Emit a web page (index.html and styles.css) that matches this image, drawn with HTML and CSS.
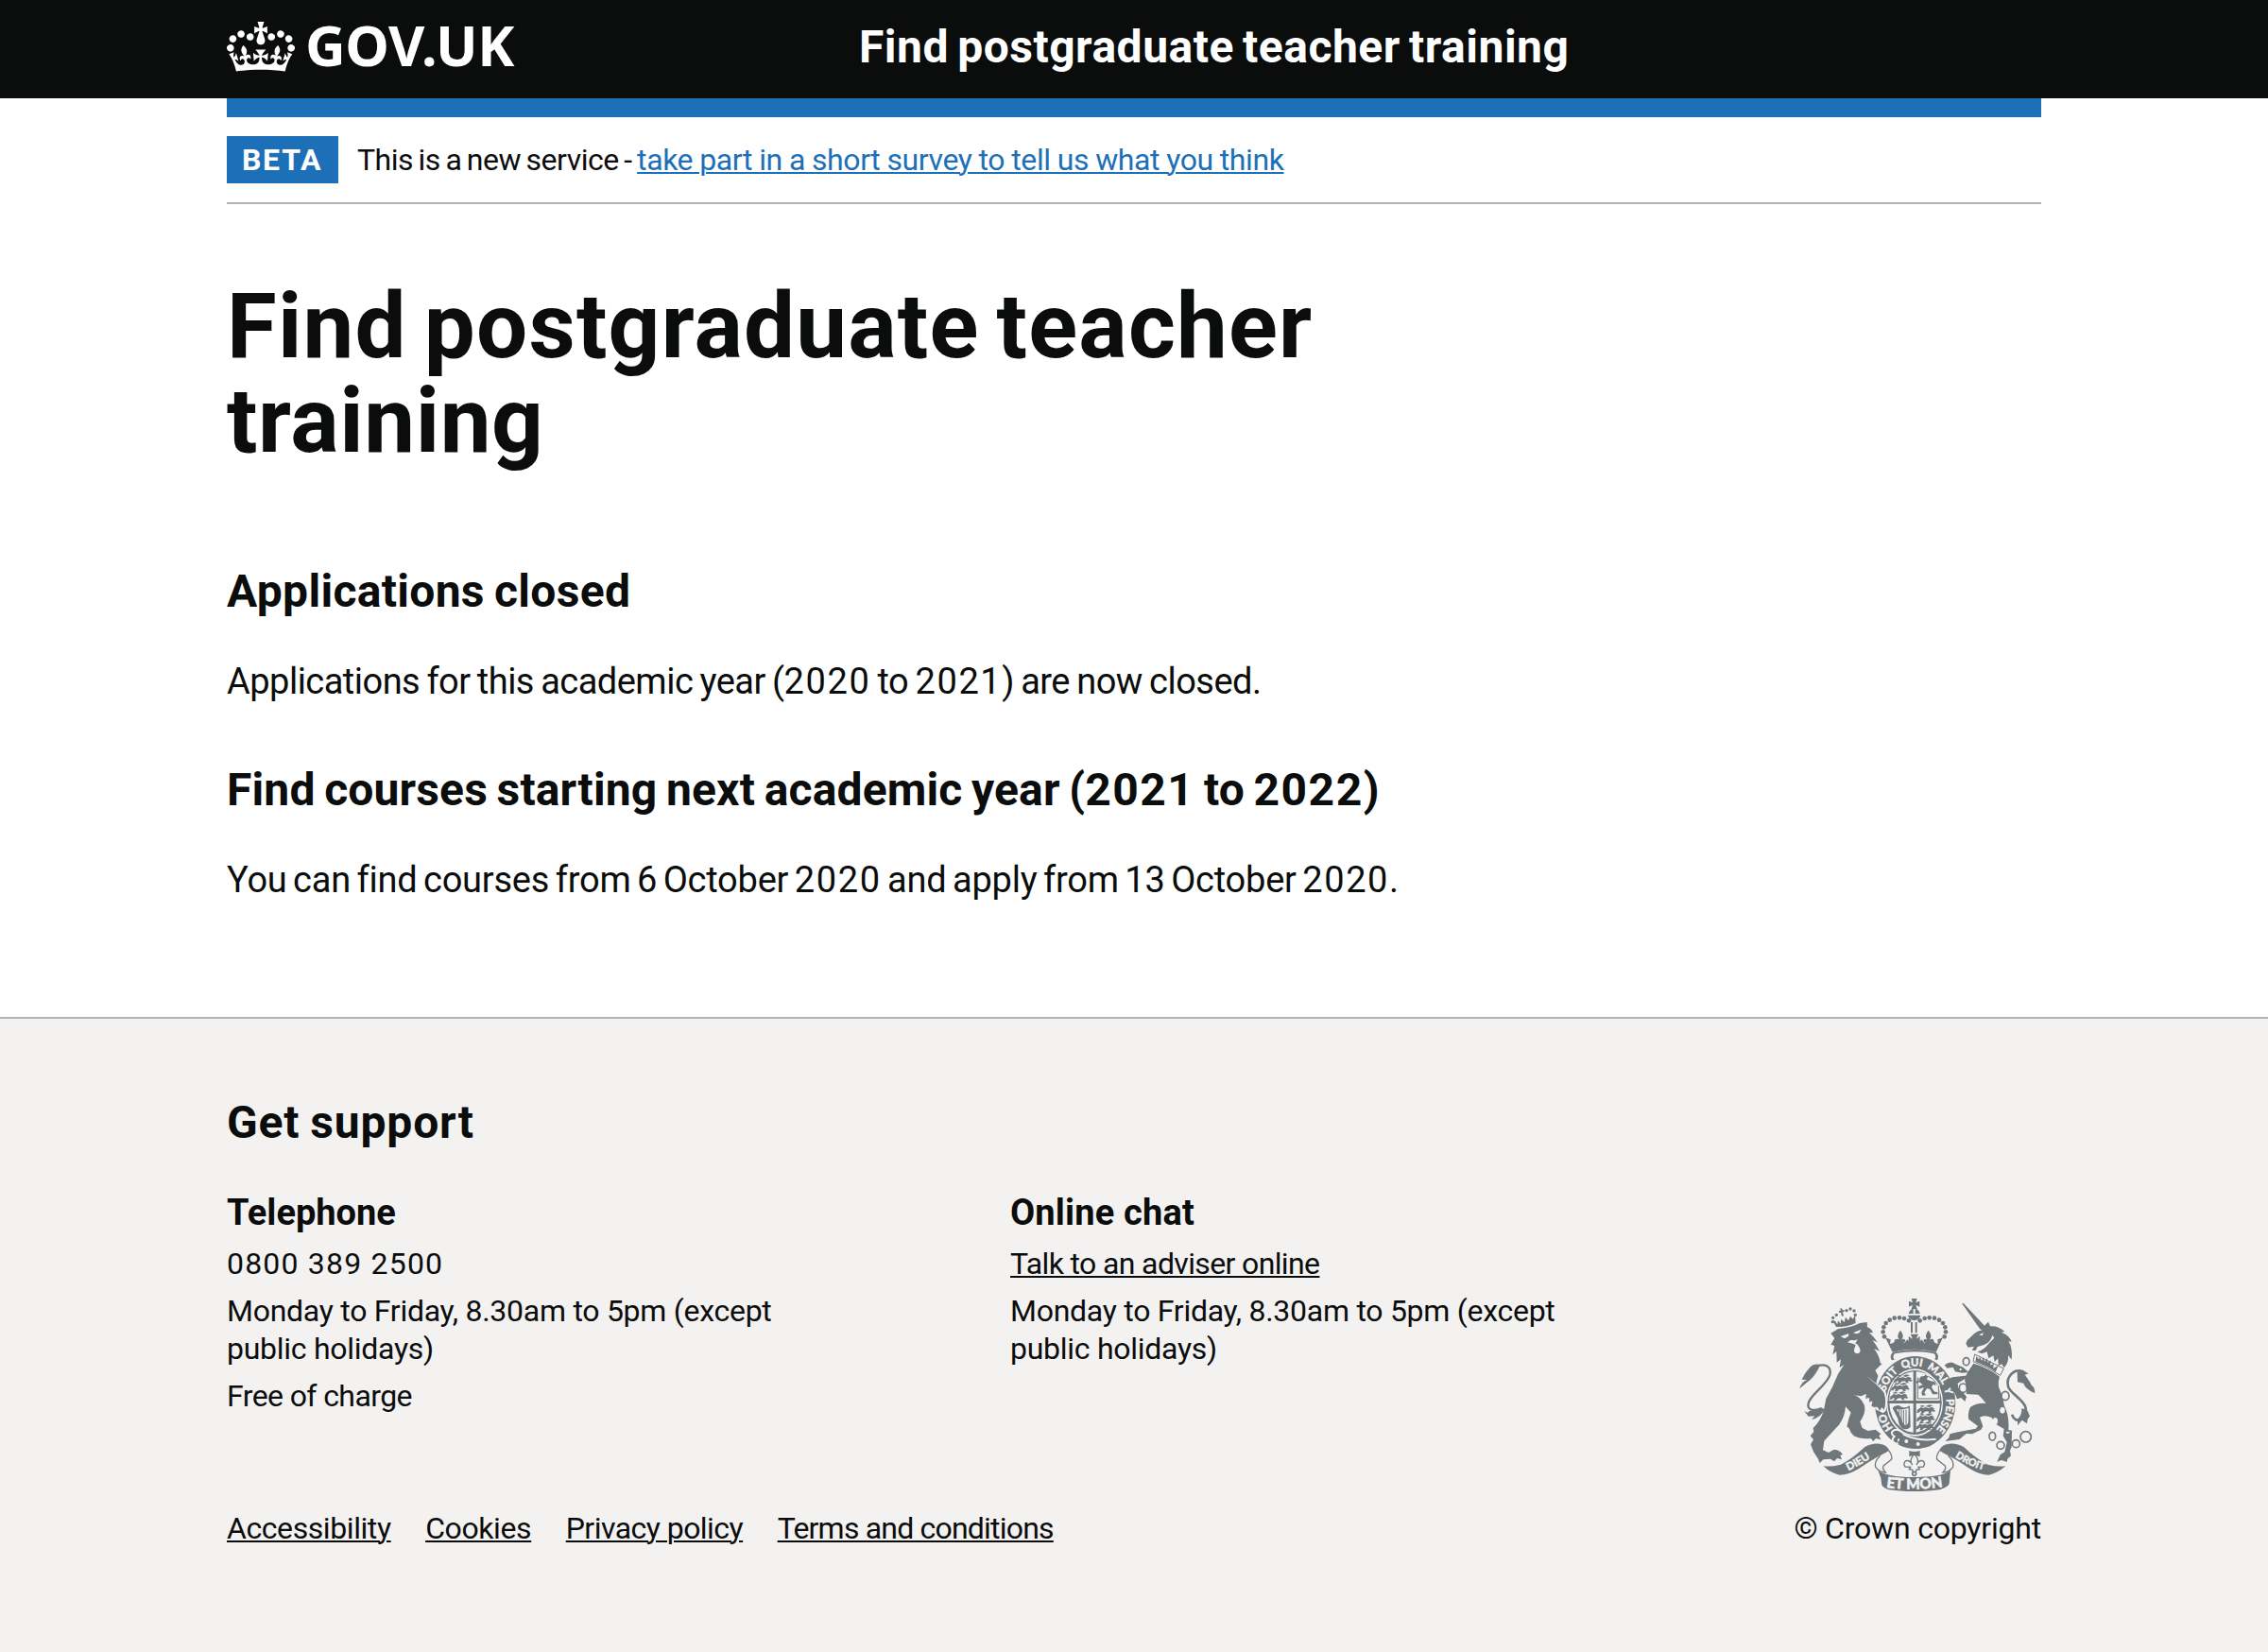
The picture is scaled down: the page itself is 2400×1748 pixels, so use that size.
FILE: index.html
```
<!DOCTYPE html>
<html lang="en">
<head>
<meta charset="utf-8">
<title>Find postgraduate teacher training - GOV.UK</title>
<link rel="stylesheet" href="styles.css">
</head>
<body>
<header class="header">
  <div class="container header-row">
    <a class="logo" href="#">
      <svg class="logo-crown" viewBox="0 0 132 97" aria-hidden="true"><path fill="currentColor" fill-rule="evenodd" d="M25 30.2c3.5 1.5 7.7-.2 9.1-3.7 1.5-3.6-.2-7.8-3.9-9.2-3.6-1.4-7.6.3-9.1 3.9-1.4 3.5.3 7.5 3.9 9zM9 39.5c3.6 1.5 7.8-.2 9.2-3.7 1.5-3.6-.2-7.8-3.9-9.1-3.6-1.5-7.6.2-9.1 3.8-1.4 3.5.3 7.5 3.8 9zM4.4 57.2c3.5 1.5 7.7-.2 9.1-3.8 1.5-3.6-.2-7.7-3.9-9.1-3.5-1.5-7.6.3-9.1 3.8-1.4 3.5.3 7.6 3.9 9.1zm38.3-21.4c3.5 1.5 7.7-.2 9.1-3.8 1.5-3.6-.2-7.7-3.9-9.1-3.6-1.5-7.6.3-9.1 3.8-1.3 3.6.4 7.7 3.9 9.1zm64.4-5.6c-3.6 1.5-7.8-.2-9.1-3.7-1.5-3.6.2-7.8 3.8-9.2 3.6-1.4 7.7.3 9.2 3.9 1.3 3.5-.4 7.5-3.9 9zm15.9 9.3c-3.6 1.5-7.7-.2-9.1-3.7-1.5-3.6.2-7.8 3.7-9.1 3.6-1.5 7.7.2 9.2 3.8 1.5 3.5-.3 7.5-3.8 9zm4.7 17.7c-3.6 1.5-7.8-.2-9.2-3.8-1.5-3.6.2-7.7 3.9-9.1 3.6-1.5 7.7.3 9.2 3.8 1.3 3.5-.4 7.6-3.9 9.1zM89.3 35.8c-3.6 1.5-7.8-.2-9.2-3.8-1.4-3.6.2-7.7 3.9-9.1 3.6-1.5 7.7.3 9.2 3.8 1.4 3.6-.3 7.7-3.9 9.1zM69.7 17.7l8.9 4.7V9.3l-8.9 2.8c-.2-.3-.5-.6-.9-.9L72.4 0H59.6l3.5 11.2c-.3.3-.6.5-.9.9l-8.8-2.8v13.1l8.8-4.7c.3.3.6.7.9.9l-5 15.4v.1c-.2.8-.4 1.6-.4 2.4 0 4.1 3.1 7.5 7 8.1h.2c.3 0 .7.1 1 .1.4 0 .7 0 1-.1h.2c4-.6 7.1-4.1 7.1-8.1 0-.8-.1-1.7-.4-2.4V34l-5.1-15.4c.4-.2.7-.6 1-.9zM66 92.8c16.9 0 32.8 1.1 47.1 3.2 4-16.9 8.9-26.7 14-33.5l-9.6-3.4c1 4.9 1.1 7.2 0 10.2-1.5-1.4-3-4.3-4.2-8.7L108.6 76c2.8-2 5-3.2 7.5-3.3-4.4 9.4-10 11.9-13.6 11.2-4.3-.8-6.3-4.6-5.6-7.9 1-4.7 5.7-5.9 8-.5 4.3-8.7-3-11.4-7.6-8.8 7.1-7.2 7.9-13.5 2.1-21.1-8 6.1-8.1 12.3-4.5 20.8-4.7-5.4-12.1-2.5-9.5 6.2 3.4-5.2 7.9-2 7.2 3.1-.6 4.3-6.4 7.8-13.5 7.2-10.3-.9-10.9-8-11.2-13.8 2.5-.5 7.1 1.8 11 7.3L80.2 60c-4.1 4.4-8 5.3-12.3 5.4 1.4-4.4 8-11.6 8-11.6H55.5s6.4 7.2 7.9 11.6c-4.2-.1-8-1-12.3-5.4l1.4 16.4c3.9-5.5 8.5-7.7 10.9-7.3-.3 5.8-.9 12.8-11.1 13.8-7.2.6-12.9-2.9-13.5-7.2-.7-5 3.8-8.3 7.1-3.1 2.7-8.7-4.6-11.6-9.4-6.2 3.7-8.5 3.6-14.7-4.6-20.8-5.8 7.6-5 13.9 2.2 21.1-4.7-2.6-11.9.1-7.7 8.8 2.3-5.5 7.1-4.2 8.1.5.7 3.3-1.3 7.1-5.7 7.9-3.5.7-9-1.8-13.5-11.2 2.5.1 4.7 1.3 7.5 3.3l-4.7-15.4c-1.2 4.4-2.7 7.2-4.3 8.7-1.1-3-.9-5.3 0-10.2l-9.5 3.4c5 6.9 9.9 16.7 14 33.5 14.8-2.1 30.8-3.2 47.7-3.2z"/></svg>
      <span class="logo-text">GOV.UK</span>
    </a>
    <a class="service-name" href="#">Find postgraduate teacher training</a>
  </div>
</header>

<div class="container">
  <div class="phase-banner">
    <strong class="tag">BETA</strong>
    <span class="phase-text">This is a new service - <a class="phase-link" href="#">take part in a short survey to tell us what you think</a></span>
  </div>
  <main class="main">
    <h1 class="title"><span class="title-first">Find postgraduate teacher</span> <span class="title-last">training</span></h1>
    <h2 class="heading heading-closed">Applications closed</h2>
    <p class="body">Applications for this academic year (<span class="figures">2020</span> to <span class="figures">2021</span>) are now closed.</p>
    <h2 class="heading heading-next">Find courses starting next academic year (<span class="figures-bold">2021</span> to <span class="figures-bold">2022</span>)</h2>
    <p class="body body-dates">You can find courses from 6 October <span class="figures">2020</span> and apply from 13 October <span class="figures">2020</span>.</p>
  </main>
</div>

<footer class="footer">
  <div class="container footer-row">
    <div class="footer-main">
      <h2 class="heading heading-support">Get support</h2>
      <div class="support">
        <section class="support-col">
          <h3 class="subheading">Telephone</h3>
          <ul class="list">
            <li class="phone">0800 389 2500</li>
            <li>Monday to Friday, 8.30am to 5pm (except public holidays)</li>
            <li class="charge">Free of charge</li>
          </ul>
        </section>
        <section class="support-col">
          <h3 class="subheading subheading-chat">Online chat</h3>
          <ul class="list">
            <li class="adviser"><a href="#">Talk to an adviser online</a></li>
            <li>Monday to Friday, 8.30am to 5pm (except public holidays)</li>
          </ul>
        </section>
      </div>
      <nav class="links">
        <a class="link-access" href="#">Accessibility</a>
        <a class="link-cookies" href="#">Cookies</a>
        <a class="link-privacy" href="#">Privacy policy</a>
        <a class="link-terms" href="#">Terms and conditions</a>
      </nav>
    </div>
    <a class="copyright" href="#">
      <svg class="crest" viewBox="72 72 750 612" aria-hidden="true">
        <defs>
          <path id="garter" d="M440 518A99 116 0 0 1 440 286A99 116 0 0 1 440 518"/>
          <path id="rib-l" d="M208 627Q250 612 316 566"/>
          <path id="rib-m" d="M350 671Q437 684 526 669"/>
          <path id="rib-r" d="M549 563Q608 606 677 622"/>
          <g id="passant"><path d="M0 9l8-8 7 4 8-3 9 3 11-4 8 5-3 4 7 3-6 4-6-3-3 5 6 2h-12l-3-6-11 1-5 6h-9l4-5-3-4-5 6h-9l5-6-4-2zM4-1l8-4 10 4 14-5 10 3-12 5-12-3-8 2z"/></g>
          <g id="lys"><path d="M0-25Q-14-9-4 5Q-11-1-15 5Q-17 12-10 14L-14 24H14L10 14Q17 12 15 5Q11-1 4 5Q14-9 0-25Z"/></g>
        </defs>

        <!-- royal crown -->
        <g class="ink">
          <path d="M428 72h18l-4 13 12-5v18l-12-5 4 12h-18l4-12-12 5V80l12 5z"/>
          <path d="M434 104v16h-15q3-14 15-16zM440 104v16h15q-3-14-15-16zM417 125h40q-1 12-20 17q-19-5-20-17z"/>
          <path d="M426 147h6v34h-6zM440 147h6v34h-6z"/>
          <g id="beads"><circle cx="420" cy="142" r="7"/><circle cx="405" cy="135" r="7"/><circle cx="390" cy="133" r="7"/><circle cx="374" cy="134" r="7"/><circle cx="359" cy="140" r="7"/><circle cx="347" cy="150" r="7"/><circle cx="340" cy="163" r="7"/><circle cx="338" cy="178" r="7"/><circle cx="342" cy="193" r="7"/></g>
          <use href="#beads" transform="matrix(-1 0 0 1 875 0)"/>
          <use href="#lys" x="393" y="198"/><use href="#lys" x="482" y="198"/>
          <path d="M425 185h25l-7 15 12-8v24h-36v-24l13 8z"/>
          <path d="M345 196l17 6-2 14 12-4 5-12q12 2 8 18l20-4 10-12 10 12h25l10-12 10 12 18 4q-4-16 8-18l6 12 10 4-1-14 17-6-22 46q-69-17-138 0z"/>
          <path fill-rule="evenodd" d="M369 242q68-16 137 0q14 14 1 29l-15-3q-55-17-109 0l-15 3q-13-15 1-29zM375 247q-9 9-1 19q64-17 127 0q8-10-1-19q-62-13-125 0z"/>
        </g>

        <!-- lion -->
        <g class="ink">
          <path d="M172 182L196 168Q240 163 264 150L287 147L288 163Q302 168 306 181L294 180Q308 192 320 211L304 204Q314 216 327 239L309 231Q326 251 329 276L345 289Q322 307 316 340L347 372Q351 399 345 422L337 417L339 430L327 420L318 431L314 418L301 413L305 396L294 401L296 386L283 390L284 374L269 382L241 378Q262 379 277 407Q287 430 265 463L272 483L290 492L314 488L331 502L325 508L331 520L315 516L307 525L299 516Q266 519 245 508L236 497L231 485L223 478Q228 452 236 434L219 415Q216 450 198 473Q188 483 151 524L147 553L165 561L181 552Q198 550 210 567L202 570L207 583L192 579L183 589L171 581L148 583L137 594L132 581L117 558L108 535L117 520L107 508L118 495L116 483Q142 457 150 425L157 390Q178 355 195 312L214 282L200 291L204 265L191 275L190 240L178 250L184 222L172 218L184 198Z"/>
          <path d="M73 358Q78 337 96 330L80 329Q91 305 106 290Q119 277 139 282Q126 312 107 330Q91 342 73 358Z"/>
          <path d="M88 430L99 434Q104 426 113 429Q132 425 140 417L152 424Q141 450 111 456L121 445L101 446Z"/>
          <path d="M189 162l-12-22 9 4 7 10 2-12 8 10 2-15 10 10 4-16 9 11 6-14 8 9 7-12 2 25q-30 14-62 12z"/>
          <path d="M202 102l6 2 1 5 5-1 1 6-5 1 3 12-6 1-3-12-6 1-1-5 6-2z"/>
          <circle cx="190" cy="124" r="5"/><circle cx="179" cy="133" r="5"/><circle cx="178" cy="146" r="5"/><circle cx="222" cy="110" r="5"/><circle cx="234" cy="105" r="5"/><circle cx="246" cy="111" r="5"/><circle cx="250" cy="124" r="5"/>
        </g>
        <path class="line" stroke-width="7" d="M120 289C155 275 175 287 169 315C160 348 92 386 101 416Q109 432 139 422"/>
        <path class="paper" d="M203 192l26-9-1 9-12 7zM243 181l25-11-5 11-10 3zM225 211l10-7 14 1 8-4-7 14 6 2q8 10 10 20q-2 10-11 10q-10-2-9-13l5-14-9-5z"/>

        <!-- unicorn -->
        <g class="ink">
          <path d="M588 87L594 88L660 158L672 146L678 160Q704 158 724 177L714 179Q741 190 746 210L736 207Q750 228 746 266L735 252Q738 275 722 292L715 280L704 285L703 262L692 273L688 253L673 262L668 241L651 247L637 241Q657 237 675 213L691 197L685 188Q680 210 659 219L638 225L632 237L620 236L627 224L608 227L601 215L605 205L627 184Q637 174 652 173L645 168Z"/>
          <path d="M625 278Q672 291 708 320Q701 342 707 358Q717 379 723 413Q739 441 736 489L747 491L746 543L741 555L744 571L733 581L731 591L714 585L700 590L710 568L724 559L731 528L719 508L722 486L695 470L683 450Q663 440 645 449L655 477L649 488L621 502L602 501L580 519L535 525L547 514L550 502L575 496L632 485L639 477L610 455Q605 437 615 417Q638 402 665 405Q650 386 640 377L602 375Q607 351 597 332L600 319L607 305Z"/>
          <path d="M820 373Q789 359 784 341L765 337L764 307L783 300L799 310L788 314Q806 337 809 347Q820 352 820 373Z"/>
          <path d="M778 421L795 425L804 445L797 455L795 469L779 458L765 475L765 455Q779 442 778 421Z"/>
        </g>
        <path class="line" stroke-width="8" d="M783 304C751 292 728 323 735 351C741 374 786 393 791 420Q792 444 767 458Q755 459 747 440"/>
        <path class="paper" d="M642 187l15-6-4 9z"/>
        <path class="collar" d="M629 249L721 294L710 316Q668 286 624 272Z"/>
        <path class="ink" d="M634 255l8 10 3-8 6 12 6-11 3 14 9-11 1 15 10-8-1 16 10-6-1 15 16-8-9 20Q674 287 631 272z"/>

        <!-- garter and arms -->
        <path class="paper" d="M313 300Q340 268 371 267Q440 240 510 268Q580 310 571 405Q562 520 480 549Q400 560 353 512Q310 460 320 420L352 420L340 350Z"/>
        <ellipse class="ink" cx="440" cy="402" rx="128" ry="147"/>
        <ellipse class="paper" cx="438" cy="402" rx="90" ry="107"/>
        <ellipse class="ink" cx="438" cy="402" rx="86" ry="102"/>
        <path class="paper" d="M434 304v92h-77q4-82 77-92zM443 304v92h75v-50q-22-38-75-42zM434 405v92q-20 0-38-14-37-30-38-78zM443 405h76q-2 76-76 92z"/>
        <g class="ink">
          <use href="#passant" x="377" y="319"/><use href="#passant" x="368" y="345"/><use href="#passant" x="364" y="373"/>
          <use href="#passant" x="450" y="415"/><use href="#passant" x="449" y="442"/><use href="#passant" x="447" y="468"/>
          <path d="M388 411q17 14 35 1l2 68q-10 10-25 5-12-8-15-32l-17-33q4-8 20-9zm-7 12l15 31q3 14 12 21 8-1 10-10l1-46q-18 8-38 4z"/>
          <path d="M458 319l10 2 4-9 8 8-3 9 13 5 12 3 4 12-9-5-5 9 8 14 11 3v6h-16l-8-16-9-3-9 13 5 9-12 1-2-10 8-16-16 5-2-8 14-6-12-8-8 5-1-8 10-2z"/>
        </g>
        <path class="line" stroke-width="3" d="M389 424v30M396 425v44M403 426v49M411 425v48M448 322v68h66v-42M448 330q35-30 63 16"/>
        <path class="line" stroke-width="4" d="M438 300v204M352 401h172"/>
        <g class="motto">
          <text><textPath href="#garter" startOffset="108">HO</textPath></text>
          <text><textPath href="#garter" startOffset="242">SOIT</textPath></text>
          <text><textPath href="#garter" startOffset="328">QUI</textPath></text>
          <text><textPath href="#garter" startOffset="413">MAL</textPath></text>
          <text><textPath href="#garter" startOffset="472">Y</textPath></text>
          <text><textPath href="#garter" startOffset="548">PENSE</textPath></text>
        </g>
        <path class="paper" d="M286 318L346 365Q355 395 347 428L338 436L314 424L311 405Q308 358 316 345Z"/>
        <path class="ink" d="M280 320Q320 342 341 371Q350 401 341 426L334 417L327 429L321 417L304 415L306 398L296 397L290 370Z"/>
        <path class="buckle" d="M403 500Q385 483 372 490Q358 499 374 510Q361 523 376 532Q392 534 386 517"/>
        <path class="buckle" d="M402 503Q450 527 506 518"/>
        <path class="ink" d="M398 512Q442 532 511 522Q493 545 452 548Q410 544 383 530Z"/>
        <g class="paper"><circle cx="412" cy="525" r="6"/><circle cx="449" cy="534" r="6"/></g>

        <!-- unicorn forelegs and chain -->
        <g class="ink">
          <path d="M533 283Q554 267 567 280L592 290L610 306L590 308L567 304L560 290L541 293Z"/>
          <path d="M612 318L575 341L577 356L592 370L603 384L598 399L586 387L573 391L566 373L545 348L545 327L558 322L597 317Z"/>
        </g>
        <g class="ring-open">
          <ellipse cx="602" cy="272" rx="10" ry="12"/><ellipse cx="592" cy="356" rx="12" ry="14"/><circle cx="584" cy="297" r="6"/>
          <ellipse cx="726" cy="381" rx="12" ry="14"/><ellipse cx="685" cy="509" rx="10" ry="13"/><circle cx="711" cy="538" r="12"/><circle cx="760" cy="533" r="12"/><circle cx="791" cy="511" r="17"/>
        </g>
        <g class="paper"><ellipse cx="717" cy="427" rx="8" ry="10"/><ellipse cx="694" cy="461" rx="8" ry="11"/><ellipse cx="734" cy="497" rx="6" ry="3"/></g>

        <!-- motto ribbon -->
        <g class="ink">
          <path d="M148 604Q173 607 204 599Q240 581 280 543Q302 530 327 533Q349 536 357 552L360 575Q345 565 328 570Q291 591 261 612Q229 632 200 632Q172 626 148 604Z"/>
          <path d="M727 604Q701 607 670 599Q634 581 594 543Q572 530 547 533Q525 536 517 552L514 575Q529 565 546 570Q583 591 613 612Q645 632 674 632Q702 626 727 604Z"/>
          <path d="M322 617Q345 638 437 639Q529 638 552 617L548 660Q542 672 517 679Q437 690 357 679Q340 675 334 664Q333 640 322 617Z"/>
        </g>
        <path class="fold" d="M329 571Q309 590 314 607Q327 624 346 624Q330 607 344 599L363 584Q371 577 357 555"/>
        <path class="fold" d="M545 571Q565 590 560 607Q547 624 528 624Q544 607 530 599L511 584Q503 577 517 555"/>
        <g class="motto">
          <text><textPath href="#rib-l" startOffset="50%">DIEU</textPath></text>
          <text class="motto-mid"><textPath href="#rib-m" startOffset="50%">ET MON</textPath></text>
          <text class="motto-end"><textPath href="#rib-r" startOffset="50%">DROIT</textPath></text>
        </g>
        <path class="ink" d="M421 555q16 6 34 0v19l-14-4-4-6-5 6-11 4z"/>
        <path class="fold" d="M437 565Q419 586 431 600Q423 584 411 587Q400 594 408 606L425 607L421 614L431 615L434 625H441L444 615L454 614L450 607L466 606Q474 594 464 587Q452 584 444 600Q456 586 437 565Z"/>
        <circle class="ring-open" cx="437" cy="628" r="6"/>
      </svg>
      <span>© Crown copyright</span>
    </a>
  </div>
</footer>
</body>
</html>
```
FILE: styles.css
```
* { box-sizing: border-box; }

body {
  margin: 0;
  min-height: 1748px;
  display: flex;
  flex-direction: column;
  background: #fff;
  color: #0b0c0c;
  font-family: Roboto, "Liberation Sans", sans-serif;
  font-size: 32px;
  line-height: 40px;
}

h1, h2, h3, p, ul { margin: 0; padding: 0; }
ul { list-style: none; }

a {
  color: inherit;
  text-decoration-thickness: 2px;
  text-underline-offset: 2px;
}

.container { width: 1920px; margin: 0 auto; }

/* Header */
.header { height: 104px; background: #0b0c0c; color: #fff; }
.header-row { display: flex; align-items: flex-start; }
.logo {
  display: flex;
  width: 669px;
  padding-top: 17px;
  gap: 11px;
  text-decoration: none;
}
.logo-crown { width: 72px; height: 53px; margin-top: 6px; }
.logo-text {
  font: bold 59px/60px "Noto Sans", sans-serif;
  letter-spacing: -0.4px;
}
.service-name {
  padding-top: 20px;
  font-size: 48px;
  font-weight: 700;
  line-height: 60px;
  letter-spacing: 0.5px;
  word-spacing: -3.2px;
  text-decoration: none;
}

/* Phase banner */
.phase-banner {
  display: flex;
  gap: 20px;
  padding: 20px 0;
  border-top: 20px solid #1d70b8;
  border-bottom: 2px solid #b1b4b6;
  line-height: 50px;
}
.tag {
  width: 118px;
  padding-left: 16px;
  background: #1d70b8;
  color: #fff;
  font-weight: 700;
  letter-spacing: 1.7px;
}
.phase-text { letter-spacing: -0.5px; word-spacing: -1.9px; }
.phase-link { color: #1d70b8; letter-spacing: -0.42px; word-spacing: -0.4px; }

/* Main content */
.main { padding: 79px 0 120px; }
.title {
  width: 1280px;
  font-size: 96px;
  font-weight: 700;
  line-height: 100px;
}
.title-first { letter-spacing: 1.2px; word-spacing: -7px; }
.title-last { letter-spacing: 0.6px; }
.heading {
  margin: 65px 0 45px;
  font-size: 48px;
  font-weight: 700;
  line-height: 50px;
}
.heading-closed { margin-top: 106px; letter-spacing: 0.3px; word-spacing: -2px; }
.heading-next { letter-spacing: 0.15px; word-spacing: -2.5px; }
.body { font-size: 38px; line-height: 50px; letter-spacing: -0.52px; word-spacing: -1.7px; }
.body-dates { letter-spacing: -0.22px; word-spacing: -2.7px; }
.figures { letter-spacing: 1.6px; }
.figures-bold { letter-spacing: 1.5px; }

/* Footer */
.footer {
  flex: 1;
  padding-top: 85px;
  border-top: 2px solid #b1b4b6;
  background: #f3f2f1;
}
.footer-row { display: flex; align-items: flex-end; justify-content: space-between; }
.heading-support { margin-top: 0; letter-spacing: 0.85px; word-spacing: -2px; }
.support { display: flex; gap: 229px; margin-bottom: 100px; }
.support-col { width: 600px; }
.subheading { font-size: 38px; font-weight: 700; line-height: 50px; }
.subheading-chat { letter-spacing: 0.17px; }
.list {
  display: flex;
  flex-direction: column;
  gap: 10px;
  padding-top: 9px;
  letter-spacing: -0.27px;
}
.phone { letter-spacing: 1.2px; }
.charge { letter-spacing: -0.6px; }
.adviser { letter-spacing: -0.63px; }
.links { display: flex; gap: 36.5px; }
.link-access { letter-spacing: -0.42px; }
.link-cookies { letter-spacing: -0.39px; }
.link-privacy { letter-spacing: -0.54px; }
.link-terms { letter-spacing: -0.8px; }
.copyright {
  display: flex;
  flex-direction: column;
  align-items: center;
  gap: 19px;
  letter-spacing: -0.2px;
  text-decoration: none;
}

/* Royal coat of arms */
.crest { width: 250px; height: 204px; }
.ink { fill: #6f777b; }
.paper { fill: #f3f2f1; }
.line { fill: none; stroke: #6f777b; }
.collar { fill: #f3f2f1; stroke: #6f777b; stroke-width: 3; }
.ring-open { fill: #f3f2f1; stroke: #6f777b; stroke-width: 5; }
.fold { fill: #f3f2f1; stroke: #6f777b; stroke-width: 4; }
.buckle { fill: none; stroke: #f3f2f1; stroke-width: 6; }
.motto {
  fill: #f3f2f1;
  stroke: #f3f2f1;
  stroke-width: 1.5px;
  font: bold 34px Lato, sans-serif;
  letter-spacing: 0;
  text-anchor: middle;
}
.motto-mid { font-size: 46px; stroke-width: 2px; }
.motto-end { font-size: 32px; }
```
